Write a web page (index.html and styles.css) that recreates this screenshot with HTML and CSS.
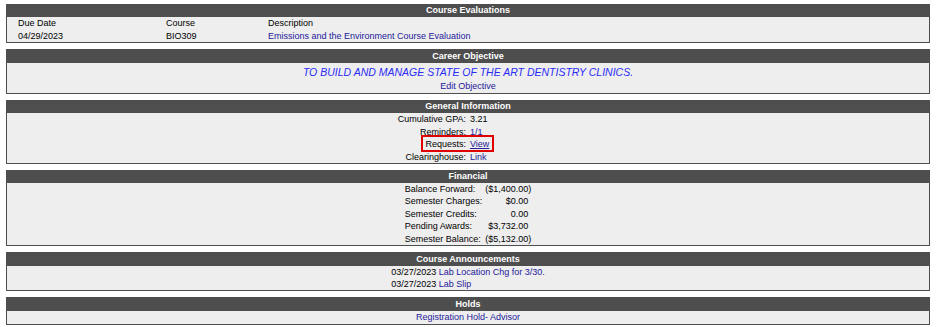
FILE: index.html
```html
<!DOCTYPE html>
<html lang="en">
<head>
    <meta charset="UTF-8">
    <title>Student Home</title>
    <link rel="stylesheet" href="styles.css">
</head>
<body>
    <!-- Course Evaluations -->
    <div class="panel">
        <div class="panel-head">Course Evaluations</div>
        <div class="panel-body eval-grid">
            <span>Due Date</span>
            <span>Course</span>
            <span>Description</span>
            <span>04/29/2023</span>
            <span>BIO309</span>
            <a href="#">Emissions and the Environment Course Evaluation</a>
        </div>
    </div>

    <!-- Career Objective -->
    <div class="panel">
        <div class="panel-head tall">Career Objective</div>
        <div class="panel-body objective">
            <div class="objective-text">TO BUILD AND MANAGE STATE OF THE ART DENTISTRY CLINICS.</div>
            <div class="line center"><a href="#">Edit Objective</a></div>
        </div>
    </div>

    <!-- General Information -->
    <div class="panel">
        <div class="panel-head">General Information</div>
        <div class="panel-body info">
            <div class="info-row"><span class="label">Cumulative GPA:</span><span>3.21</span></div>
            <div class="info-row"><span class="label">Reminders:</span><a href="#">1/1</a></div>
            <div class="info-row marked"><span class="label">Requests:</span><a href="#" class="underline">View</a></div>
            <div class="info-row"><span class="label">Clearinghouse:</span><a href="#">Link</a></div>
        </div>
    </div>

    <!-- Financial -->
    <div class="panel">
        <div class="panel-head">Financial</div>
        <div class="panel-body">
            <div class="money">
                <span>Balance Forward:</span><span class="amt">($1,400.00)</span>
                <span>Semester Charges:</span><span class="amt pos">$0.00</span>
                <span>Semester Credits:</span><span class="amt pos">0.00</span>
                <span>Pending Awards:</span><span class="amt pos">$3,732.00</span>
                <span>Semester Balance:</span><span class="amt">($5,132.00)</span>
            </div>
        </div>
    </div>

    <!-- Course Announcements -->
    <div class="panel">
        <div class="panel-head tall">Course Announcements</div>
        <div class="panel-body">
            <div class="announce">
                <div class="announce-row">03/27/2023 <a href="#">Lab Location Chg for 3/30.</a></div>
                <div class="announce-row">03/27/2023 <a href="#">Lab Slip</a></div>
            </div>
        </div>
    </div>

    <!-- Holds -->
    <div class="panel">
        <div class="panel-head tall">Holds</div>
        <div class="panel-body">
            <div class="line center"><a href="#">Registration Hold- Advisor</a></div>
        </div>
    </div>
</body>
</html>
```

FILE: styles.css
```css
/* General Styles */
body {
    margin: 4px 6px 0 6px;
    font-family: 'Liberation Sans', Arial, sans-serif;
    font-size: 9px;
    color: #000;
    background: #fff;
}

a {
    color: #24209a;
    text-decoration: none;
}

.underline {
    text-decoration: underline;
}

.panel {
    border: 1px solid #4e4e4e;
    border-top: none;
    background: #eeeeee;
    margin-bottom: 6px;
}

.panel-head {
    background: #4e4e4e;
    color: #fff;
    font-weight: bold;
    text-align: center;
    height: 13px;
    line-height: 13px;
}

.panel-head.tall {
    height: 14px;
    line-height: 14px;
}

.line {
    line-height: 12.5px;
}

.center {
    text-align: center;
}

/* Course evaluations */
.eval-grid {
    display: grid;
    grid-template-columns: 148px 102px 1fr;
    padding-left: 11px;
    line-height: 12.5px;
}

/* Career objective */
.objective {
    height: 30px;
    padding-top: 2px;
    box-sizing: border-box;
}

.objective-text {
    color: #2b2bf5;
    font-style: italic;
    font-size: 10.5px;
    text-align: center;
    line-height: 15px;
}

/* General information */
.info-row {
    display: grid;
    grid-template-columns: 1fr 1fr;
    column-gap: 4px;
    line-height: 12.5px;
    position: relative;
}

.info-row .label {
    text-align: right;
}

.info-row.marked::after {
    content: "";
    position: absolute;
    left: calc(50% - 47px);
    top: -3px;
    width: 73px;
    height: 17px;
    border: 2px solid #e00000;
    box-sizing: border-box;
}

/* Financial */
.money {
    display: grid;
    grid-template-columns: auto auto;
    column-gap: 3px;
    width: fit-content;
    margin: 0 auto;
    line-height: 12.4px;
}

.money .amt {
    text-align: right;
}

.money .pos {
    padding-right: 3px;
}

/* Announcements */
.announce {
    width: fit-content;
    margin: 0 auto;
}

.announce-row {
    line-height: 12px;
}
```
